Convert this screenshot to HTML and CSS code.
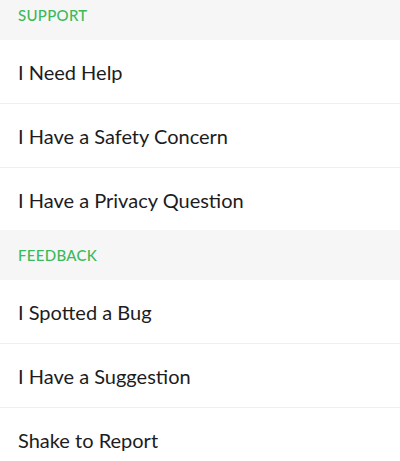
FILE: index.html
```html
<!DOCTYPE html>
<html lang="en">
<head>
  <meta charset="UTF-8">
  <meta name="viewport" content="width=device-width, initial-scale=1.0">
  <title>Support</title>
  <link rel="stylesheet" href="styles.css">
</head>
<body>

  <section class="group group-first">
    <h3 class="group-title">SUPPORT</h3>
    <ul class="menu">
      <li class="menu-item">I Need Help</li>
      <li class="menu-item">I Have a Safety Concern</li>
      <li class="menu-item">I Have a Privacy Question</li>
    </ul>
  </section>

  <section class="group">
    <h3 class="group-title">FEEDBACK</h3>
    <ul class="menu">
      <li class="menu-item">I Spotted a Bug</li>
      <li class="menu-item">I Have a Suggestion</li>
      <li class="menu-item">Shake to Report</li>
    </ul>
  </section>

</body>
</html>
```

FILE: styles.css
```css
body {
  font-family: Lato, "Noto Sans", sans-serif;
  margin: 0;
  padding: 0;
  background-color: #ffffff;
  color: #1c1c1e;
}

.group-title {
  margin: 0;
  height: 50px;
  box-sizing: border-box;
  padding: 0 18px 16px 18px;
  display: flex;
  align-items: flex-end;
  background-color: #f6f6f7;
  color: #3cb95a;
  font-size: 15px;
  font-weight: 500;
  letter-spacing: 0.3px;
}

.group-first .group-title {
  height: 40px; /* top of the list is scrolled out of view */
}

.menu {
  list-style: none;
  margin: 0;
  padding: 0;
}

.menu-item {
  height: 63px;
  padding: 1px 18px 0 18px;
  box-sizing: border-box;
  height: 64px;
  display: flex;
  align-items: center;
  font-size: 20px;
  border-bottom: 1px solid #efeff0;
}

.menu-item:last-child {
  height: 62px;
  border-bottom: none;
}
```
